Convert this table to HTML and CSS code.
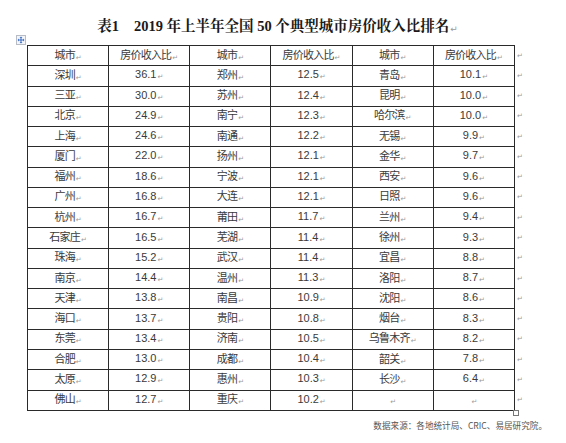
FILE: index.html
```html
<!DOCTYPE html>
<html lang="zh-CN">
<head>
<meta charset="utf-8">
<title>表1 2019 年上半年全国 50 个典型城市房价收入比排名</title>
<link rel="stylesheet" href="styles.css">
</head>
<body>
<div class="page">
  <h1 class="title"><span class="t-label">表1</span>2019 年上半年全国 50 个典型城市房价收入比排名<span class="pm">↵</span></h1>
  <div class="table-wrap">
    <span class="move-handle"><svg width="10" height="10" viewBox="0 0 10 10"><rect x="0.5" y="0.5" width="9" height="9" fill="#f3f5f9" stroke="#b8bcc4"/><path d="M5 2.5v5M2.5 5h5" stroke="#3b6fc4" stroke-width="1"/><path d="M5 1.6l-1.4 1.4h2.8zM5 8.4l-1.4-1.4h2.8zM1.6 5l1.4-1.4v2.8zM8.4 5l-1.4-1.4v2.8z" fill="#3b6fc4"/></svg></span>
    <table class="rank">
      <colgroup>
        <col class="c"><col class="c"><col class="c"><col class="c"><col class="c"><col class="c"><col class="eol-col">
      </colgroup>
      <tr><td class="cjk">城市<span class="pm">↵</span></td><td class="cjk">房价收入比<span class="pm">↵</span></td><td class="cjk">城市<span class="pm">↵</span></td><td class="cjk">房价收入比<span class="pm">↵</span></td><td class="cjk">城市<span class="pm">↵</span></td><td class="cjk">房价收入比<span class="pm">↵</span></td><td class="eol">↵</td></tr>
      <tr><td class="cjk">深圳<span class="pm">↵</span></td><td class="num">36.1<span class="pm">↵</span></td><td class="cjk">郑州<span class="pm">↵</span></td><td class="num">12.5<span class="pm">↵</span></td><td class="cjk">青岛<span class="pm">↵</span></td><td class="num">10.1<span class="pm">↵</span></td><td class="eol">↵</td></tr>
      <tr><td class="cjk">三亚<span class="pm">↵</span></td><td class="num">30.0<span class="pm">↵</span></td><td class="cjk">苏州<span class="pm">↵</span></td><td class="num">12.4<span class="pm">↵</span></td><td class="cjk">昆明<span class="pm">↵</span></td><td class="num">10.0<span class="pm">↵</span></td><td class="eol">↵</td></tr>
      <tr><td class="cjk">北京<span class="pm">↵</span></td><td class="num">24.9<span class="pm">↵</span></td><td class="cjk">南宁<span class="pm">↵</span></td><td class="num">12.3<span class="pm">↵</span></td><td class="cjk">哈尔滨<span class="pm">↵</span></td><td class="num">10.0<span class="pm">↵</span></td><td class="eol">↵</td></tr>
      <tr><td class="cjk">上海<span class="pm">↵</span></td><td class="num">24.6<span class="pm">↵</span></td><td class="cjk">南通<span class="pm">↵</span></td><td class="num">12.2<span class="pm">↵</span></td><td class="cjk">无锡<span class="pm">↵</span></td><td class="num">9.9<span class="pm">↵</span></td><td class="eol">↵</td></tr>
      <tr><td class="cjk">厦门<span class="pm">↵</span></td><td class="num">22.0<span class="pm">↵</span></td><td class="cjk">扬州<span class="pm">↵</span></td><td class="num">12.1<span class="pm">↵</span></td><td class="cjk">金华<span class="pm">↵</span></td><td class="num">9.7<span class="pm">↵</span></td><td class="eol">↵</td></tr>
      <tr><td class="cjk">福州<span class="pm">↵</span></td><td class="num">18.6<span class="pm">↵</span></td><td class="cjk">宁波<span class="pm">↵</span></td><td class="num">12.1<span class="pm">↵</span></td><td class="cjk">西安<span class="pm">↵</span></td><td class="num">9.6<span class="pm">↵</span></td><td class="eol">↵</td></tr>
      <tr><td class="cjk">广州<span class="pm">↵</span></td><td class="num">16.8<span class="pm">↵</span></td><td class="cjk">大连<span class="pm">↵</span></td><td class="num">12.1<span class="pm">↵</span></td><td class="cjk">日照<span class="pm">↵</span></td><td class="num">9.6<span class="pm">↵</span></td><td class="eol">↵</td></tr>
      <tr><td class="cjk">杭州<span class="pm">↵</span></td><td class="num">16.7<span class="pm">↵</span></td><td class="cjk">莆田<span class="pm">↵</span></td><td class="num">11.7<span class="pm">↵</span></td><td class="cjk">兰州<span class="pm">↵</span></td><td class="num">9.4<span class="pm">↵</span></td><td class="eol">↵</td></tr>
      <tr><td class="cjk">石家庄<span class="pm">↵</span></td><td class="num">16.5<span class="pm">↵</span></td><td class="cjk">芜湖<span class="pm">↵</span></td><td class="num">11.4<span class="pm">↵</span></td><td class="cjk">徐州<span class="pm">↵</span></td><td class="num">9.3<span class="pm">↵</span></td><td class="eol">↵</td></tr>
      <tr><td class="cjk">珠海<span class="pm">↵</span></td><td class="num">15.2<span class="pm">↵</span></td><td class="cjk">武汉<span class="pm">↵</span></td><td class="num">11.4<span class="pm">↵</span></td><td class="cjk">宜昌<span class="pm">↵</span></td><td class="num">8.8<span class="pm">↵</span></td><td class="eol">↵</td></tr>
      <tr><td class="cjk">南京<span class="pm">↵</span></td><td class="num">14.4<span class="pm">↵</span></td><td class="cjk">温州<span class="pm">↵</span></td><td class="num">11.3<span class="pm">↵</span></td><td class="cjk">洛阳<span class="pm">↵</span></td><td class="num">8.7<span class="pm">↵</span></td><td class="eol">↵</td></tr>
      <tr><td class="cjk">天津<span class="pm">↵</span></td><td class="num">13.8<span class="pm">↵</span></td><td class="cjk">南昌<span class="pm">↵</span></td><td class="num">10.9<span class="pm">↵</span></td><td class="cjk">沈阳<span class="pm">↵</span></td><td class="num">8.6<span class="pm">↵</span></td><td class="eol">↵</td></tr>
      <tr><td class="cjk">海口<span class="pm">↵</span></td><td class="num">13.7<span class="pm">↵</span></td><td class="cjk">贵阳<span class="pm">↵</span></td><td class="num">10.8<span class="pm">↵</span></td><td class="cjk">烟台<span class="pm">↵</span></td><td class="num">8.3<span class="pm">↵</span></td><td class="eol">↵</td></tr>
      <tr><td class="cjk">东莞<span class="pm">↵</span></td><td class="num">13.4<span class="pm">↵</span></td><td class="cjk">济南<span class="pm">↵</span></td><td class="num">10.5<span class="pm">↵</span></td><td class="cjk">乌鲁木齐<span class="pm">↵</span></td><td class="num">8.2<span class="pm">↵</span></td><td class="eol">↵</td></tr>
      <tr><td class="cjk">合肥<span class="pm">↵</span></td><td class="num">13.0<span class="pm">↵</span></td><td class="cjk">成都<span class="pm">↵</span></td><td class="num">10.4<span class="pm">↵</span></td><td class="cjk">韶关<span class="pm">↵</span></td><td class="num">7.8<span class="pm">↵</span></td><td class="eol">↵</td></tr>
      <tr><td class="cjk">太原<span class="pm">↵</span></td><td class="num">12.9<span class="pm">↵</span></td><td class="cjk">惠州<span class="pm">↵</span></td><td class="num">10.3<span class="pm">↵</span></td><td class="cjk">长沙<span class="pm">↵</span></td><td class="num">6.4<span class="pm">↵</span></td><td class="eol">↵</td></tr>
      <tr><td class="cjk">佛山<span class="pm">↵</span></td><td class="num">12.7<span class="pm">↵</span></td><td class="cjk">重庆<span class="pm">↵</span></td><td class="num">10.2<span class="pm">↵</span></td><td class="cjk"><span class="pm">↵</span></td><td class="num"><span class="pm">↵</span></td><td class="eol">↵</td></tr>
    </table>
    <span class="resize-handle"></span>
  </div>
  <p class="source">数据来源：各地统计局、CRIC、易居研究院。</p>
</div>
</body>
</html>
```

FILE: styles.css
```css
html, body {
  margin: 0;
  padding: 0;
  background: #ffffff;
}

.page {
  width: 566px;
  height: 443px;
  overflow: hidden;
  padding-top: 16px;
  box-sizing: border-box;
  font-family: "Noto Sans CJK SC", sans-serif;
  color: #333;
}

.title {
  margin: 0 0 6px 34px;
  width: 487px;
  text-align: center;
  font-family: "Liberation Serif", "Noto Serif CJK SC", "Noto Sans CJK SC", serif;
  font-size: 14.5px;
  line-height: 20px;
  font-weight: 700;
  color: #1a1a1a;
  white-space: nowrap;
}

.t-label {
  margin-right: 15px;
}

.title .pm {
  font-size: 9px;
  font-weight: 400;
}

.table-wrap {
  position: relative;
  margin-left: 27px;
  width: 507px;
}

.move-handle {
  position: absolute;
  left: -11px;
  top: -10px;
  width: 10px;
  height: 10px;
  line-height: 0;
}

.rank {
  border-collapse: collapse;
  table-layout: fixed;
  width: 507px;
  height: 366px;
}

.rank col.c {
  width: 81.17px;
}

.rank col.eol-col {
  width: 20px;
}

.rank td {
  border: 1px solid #2a2a2a;
  padding: 0;
  text-align: center;
  vertical-align: middle;
  white-space: nowrap;
  color: #3a3a3a;
  line-height: 14px;
}

.rank td.cjk {
  font-family: "Noto Sans CJK SC", sans-serif;
  font-size: 11px;
  letter-spacing: -0.8px;
}

.rank td.num {
  font-family: "Liberation Sans", Arial, sans-serif;
  font-size: 11px;
}

.rank td.eol {
  border: none;
  text-align: left;
  padding-left: 2px;
  font-family: "DejaVu Sans", sans-serif;
  font-size: 7px;
  color: #9a9a9a;
}

.pm {
  font-family: "DejaVu Sans", sans-serif;
  font-size: 7px;
  color: #9a9a9a;
  letter-spacing: 0;
  margin-left: 1px;
  vertical-align: -1px;
}

.resize-handle {
  position: absolute;
  left: 486px;
  top: 365px;
  width: 4px;
  height: 4px;
  border: 1px solid #777;
  background: #fff;
}

.source {
  margin: 8px 0 0;
  width: 547px;
  text-align: right;
  font-family: "Noto Sans CJK SC", sans-serif;
  font-size: 8.6px;
  line-height: 12px;
  color: #555;
  white-space: nowrap;
}
```
